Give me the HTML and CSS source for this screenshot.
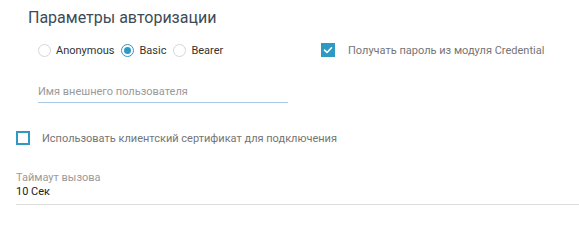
FILE: index.html
```html
<!DOCTYPE html>
<html lang="ru">
<head>
<meta charset="utf-8">
<link rel="stylesheet" href="styles.css">
</head>
<body>
<div class="page">
  <section class="auth">
    <h2 class="title">Параметры авторизации</h2>
    <div class="auth-row">
      <div class="left">
        <div class="radios">
          <label class="radio"><span class="circle"></span><span class="rlabel">Anonymous</span></label>
          <label class="radio checked"><span class="circle"><span class="dot"></span></span><span class="rlabel">Basic</span></label>
          <label class="radio"><span class="circle"></span><span class="rlabel">Bearer</span></label>
        </div>
        <div class="field user">
          <span class="placeholder">Имя внешнего пользователя</span>
        </div>
      </div>
      <div class="right">
        <label class="check checked">
          <span class="box"><svg viewBox="0 0 14 14" width="14" height="14"><path d="M3.5 7.2 L6 9.5 L10.5 4.8" fill="none" stroke="#fff" stroke-width="1.6" stroke-linecap="round" stroke-linejoin="round"/></svg></span>
          <span class="clabel">Получать пароль из модуля Credential</span>
        </label>
      </div>
    </div>
  </section>
  <label class="check cert">
    <span class="box"></span>
    <span class="clabel">Использовать клиентский сертификат для подключения</span>
  </label>
  <div class="timeout">
    <div class="tlabel">Таймаут вызова</div>
    <div class="tvalue">10 Сек</div>
  </div>
</div>
</body>
</html>
```
FILE: styles.css
```css
html, body {
  margin: 0;
  padding: 0;
  background: #fff;
}
body {
  font-family: Roboto, "Liberation Sans", sans-serif;
  width: 579px;
  height: 218px;
  overflow: hidden;
}
.page {
  padding: 0 0 0 16px;
}
.auth {
  padding-left: 12px;
}
.title {
  margin: 0;
  padding-top: 8px;
  font-size: 16px;
  font-weight: 400;
  line-height: 20px;
  color: #3d4b57;
}
.auth-row {
  display: flex;
  margin-top: 11px;
}
.left {
  width: 250px;
  padding-left: 10px;
}
.radios {
  display: flex;
  align-items: center;
  gap: 7px;
  height: 22px;
}
.radio {
  display: flex;
  align-items: center;
  gap: 5px;
  font-size: 11px;
  color: #333;
}
.circle {
  width: 13px;
  height: 13px;
  box-sizing: border-box;
  border: 1px solid #d6d6d6;
  border-radius: 50%;
  display: flex;
  align-items: center;
  justify-content: center;
}
.radio.checked .circle {
  border-color: #2e9ac4;
}
.dot {
  width: 7px;
  height: 7px;
  border-radius: 50%;
  background: #2e9ac4;
}
.field.user {
  margin-top: 19px;
  height: 22px;
  border-bottom: 1px solid #a8c8e4;
  display: flex;
  align-items: center;
  font-size: 11px;
  color: #9a9a9a;
}
.right {
  padding-left: 33px;
}
.check {
  display: flex;
  align-items: center;
  gap: 13px;
  font-size: 11px;
  color: #757575;
  height: 22px;
}
.box {
  width: 14px;
  height: 14px;
  box-sizing: border-box;
  border: 2px solid #2e9ac4;
  display: flex;
  align-items: center;
  justify-content: center;
}
.check.checked .box {
  background: #2e9ac4;
  border: none;
}
.check.cert {
  margin-top: 24px;
  gap: 12px;
}
.timeout {
  margin-top: 22px;
  border-bottom: 1px solid #dcdcdc;
  padding-bottom: 5px;
}
.tlabel {
  font-size: 11px;
  color: #9a9a9a;
  line-height: 13px;
}
.tvalue {
  margin-top: 1px;
  font-size: 11px;
  color: #222;
  line-height: 14px;
}
```
